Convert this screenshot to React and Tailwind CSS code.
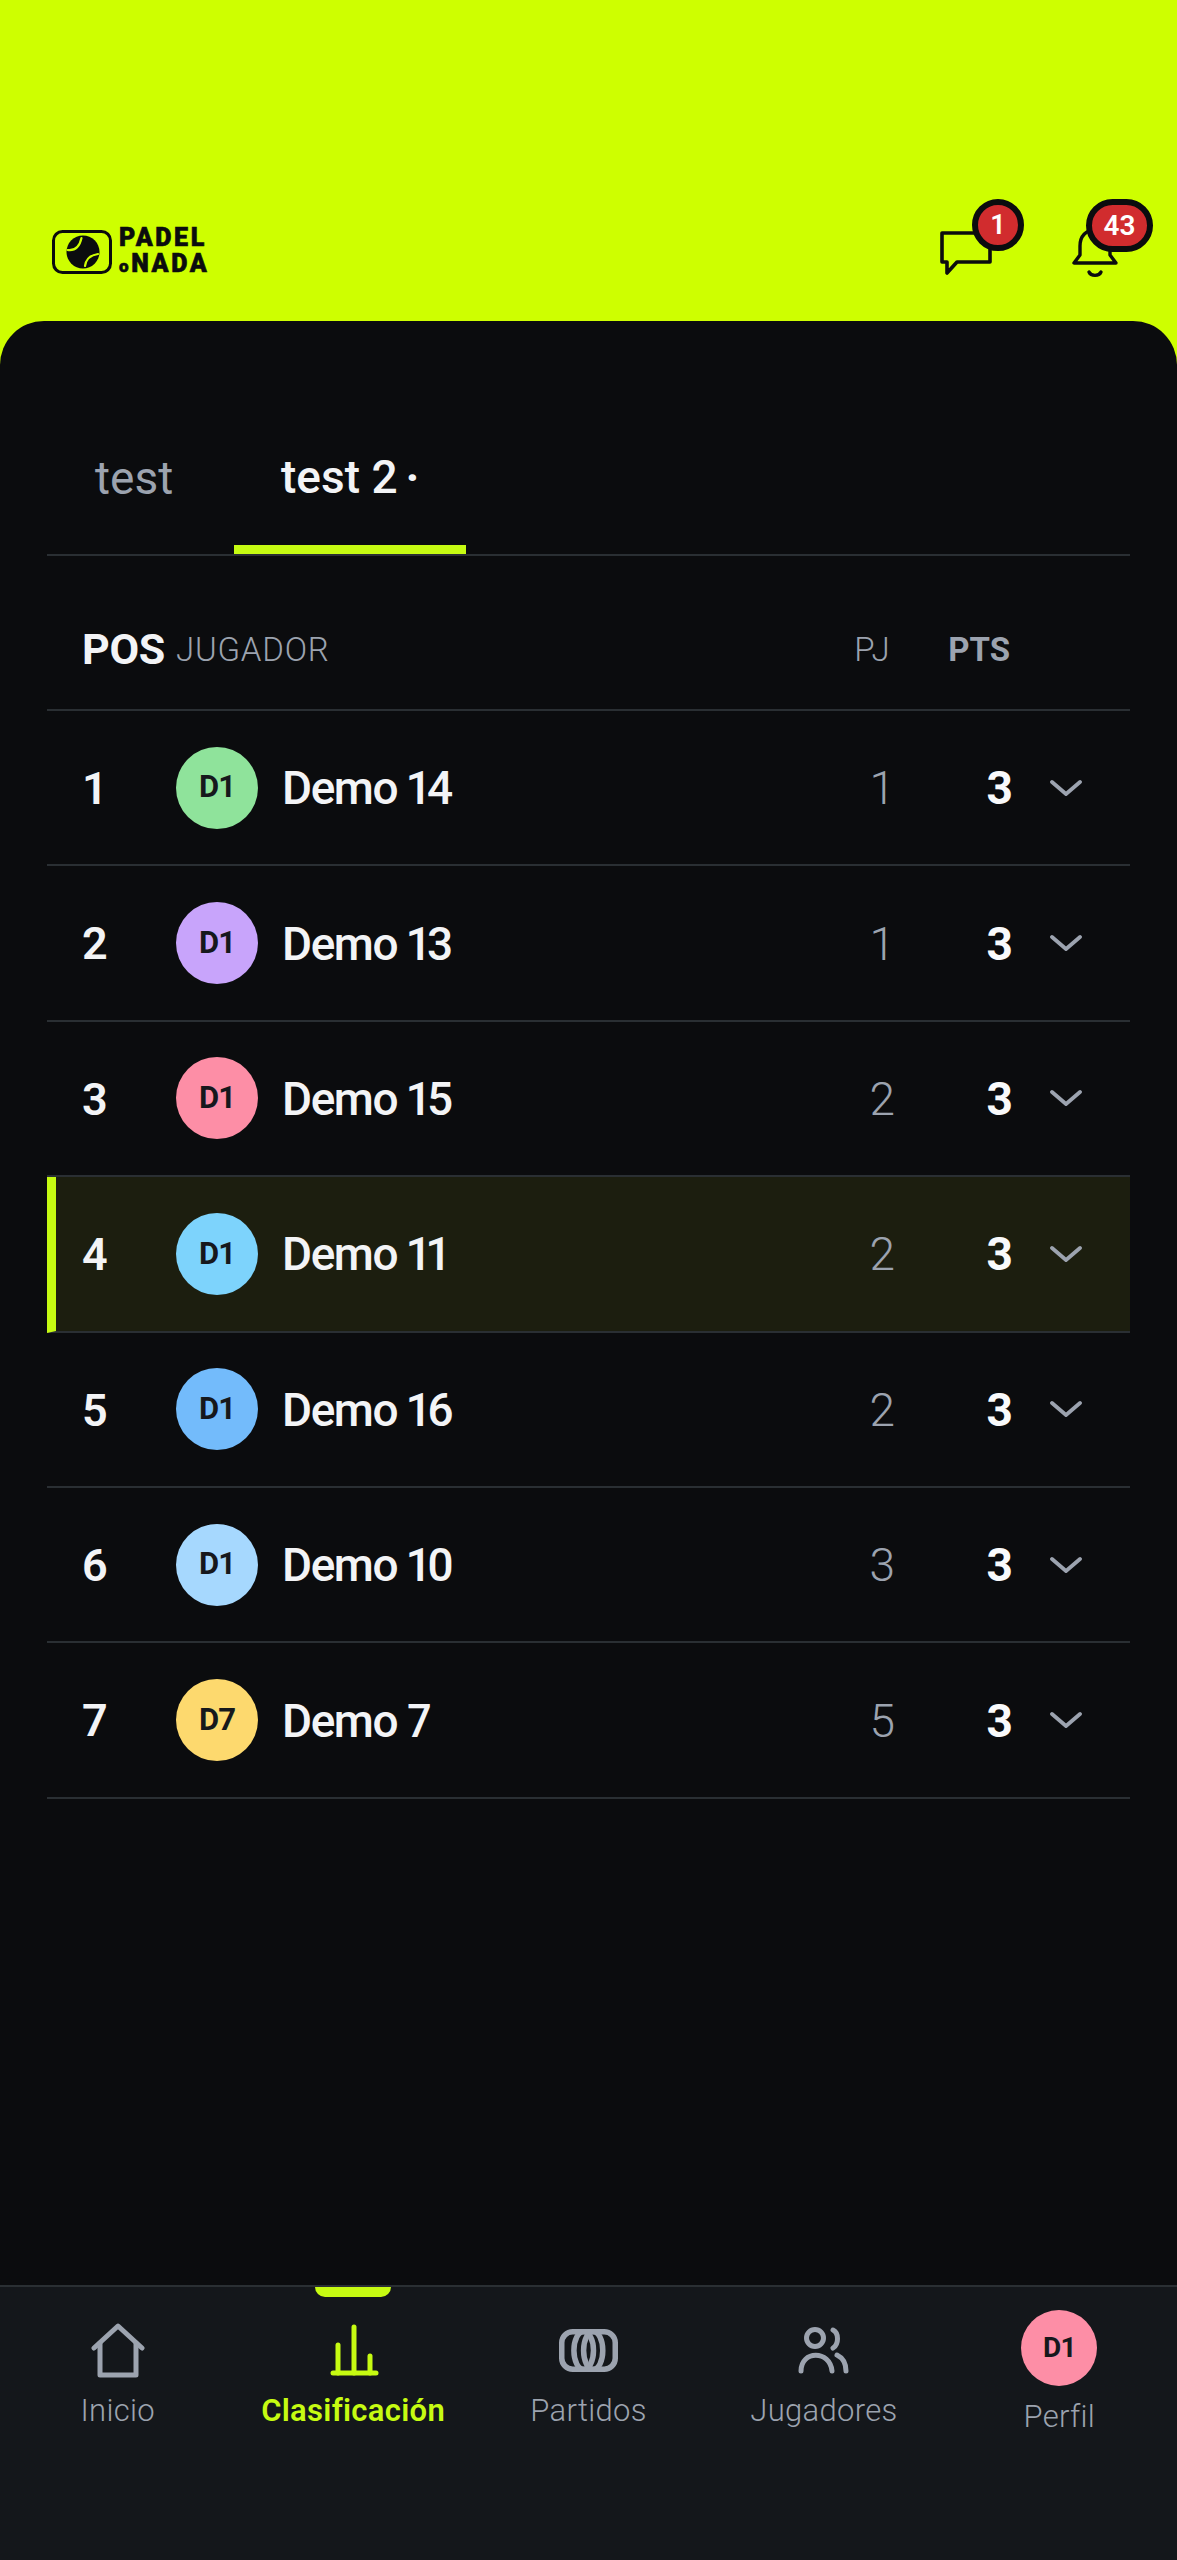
const ROWS = [
  { pos: 1, name: 'Demo 14', initials: 'D1', color: 'bg-[#8fe39b]', pj: 1 },
  { pos: 2, name: 'Demo 13', initials: 'D1', color: 'bg-[#c8a4fb]', pj: 1 },
  { pos: 3, name: 'Demo 15', initials: 'D1', color: 'bg-[#fd8ea6]', pj: 2 },
  { pos: 4, name: 'Demo 11', initials: 'D1', color: 'bg-[#7dd3fc]', pj: 2, me: true },
  { pos: 5, name: 'Demo 16', initials: 'D1', color: 'bg-[#73bbfb]', pj: 2 },
  { pos: 6, name: 'Demo 10', initials: 'D1', color: 'bg-[#a6d8fe]', pj: 3 },
  { pos: 7, name: 'Demo 7', initials: 'D7', color: 'bg-[#fdd96e]', pj: 5 },
];

// Logo mark: rounded frame with a padel ball
const LogoMark = () => (
  <svg width="60" height="44" viewBox="0 0 60 44" fill="none">
    <rect x="1.5" y="1.5" width="57" height="41" rx="9" stroke="#0b0c0e" strokeWidth="3" />
    <circle cx="31" cy="22" r="16.5" fill="#0b0c0e" />
    <path d="M15.5 20c7 1 12 -3 14 -12" stroke="#cfff00" strokeWidth="2.2" strokeLinecap="round" />
    <path d="M33 36c1 -7 6 -11 13 -12" stroke="#cfff00" strokeWidth="2.2" strokeLinecap="round" />
  </svg>
);

const ChatIcon = () => (
  <svg width="52" height="44" viewBox="0 0 52 44" fill="none" stroke="#0b0c0e" strokeWidth="3.6" strokeLinejoin="round" strokeLinecap="round">
    <path d="M2 2h48v29H17L7 42V31H2z" />
  </svg>
);

const BellIcon = () => (
  <svg width="46" height="50" viewBox="0 0 46 50" fill="none" stroke="#0b0c0e" strokeWidth="3.4" strokeLinejoin="round" strokeLinecap="round">
    <path d="M2 35h42l-6 -8V18C38 8 32 2 23 2S8 8 8 18v9z" />
    <path d="M17 44c2 4.500 10 4.500 12 0" />
  </svg>
);

const HomeIcon = () => (
  <svg width="54" height="55" viewBox="0 0 54 55" fill="none" stroke="#9ca3af" strokeWidth="5" strokeLinejoin="round" strokeLinecap="round">
    <path d="M3 25L27 3l24 22" />
    <path d="M9 20v32h36V20" />
  </svg>
);

const ChartIcon = () => (
  <svg className="ml-[3px]" width="49" height="52" viewBox="0 0 49 52" fill="none" stroke="#c6fb12" strokeWidth="5" strokeLinecap="round">
    <path d="M3 49h43" />
    <path d="M24 49V3" />
    <path d="M8 49V21" />
    <path d="M40 49V32" />
  </svg>
);

const MatchesIcon = () => (
  <svg width="59" height="43" viewBox="0 0 59 43" fill="none" stroke="#9ca3af" strokeWidth="5.500">
    <rect x="2.750" y="2.750" width="53.500" height="37.500" rx="11" />
    <ellipse cx="24.700" cy="21.500" rx="9.800" ry="19" />
    <ellipse cx="34.200" cy="21.500" rx="9.600" ry="19" />
  </svg>
);

const PlayersIcon = () => (
  <svg width="52" height="47" viewBox="0 0 52 47" fill="none" stroke="#9ca3af" strokeWidth="5" strokeLinecap="round">
    <circle cx="17" cy="11" r="8.500" />
    <path d="M3 44c0 -21 29 -21 31 0" />
    <path d="M35 3c6 3 6 14 0 18" />
    <path d="M39 28c6 3 9 9 9 16" />
  </svg>
);

const ChevronIcon = () => (
  <svg width="32" height="18" viewBox="0 0 32 18" fill="none" stroke="#9ca3af" strokeWidth="3.8" strokeLinecap="round" strokeLinejoin="round">
    <path d="M2 3l14 12L30 3" />
  </svg>
);

const NavItem = ({ icon, label, active }) => (
  <div className="flex flex-1 flex-col items-center">
    <div className="flex h-[62px] items-center justify-center">{icon}</div>
    <span className={`mt-[12px] text-[31px] leading-[36px] tracking-[0.3px] ${active ? 'font-semibold text-[#c6fb12]' : 'font-[350] text-[#9ca3af]'}`}>
      {label}
    </span>
  </div>
);

export default function App() {
  return (
    <div className="flex h-[2560px] w-[1177px] flex-col overflow-hidden bg-[#ceff00] font-['Roboto','Liberation_Sans',sans-serif]">
      {/* Header */}
      <header className="flex h-[321px] shrink-0 items-start justify-between pl-[52px] pr-[59px] pt-[198px]">
        <div className="mt-[27px] flex items-center gap-[7px]">
          <LogoMark />
          <div className="flex flex-col text-[#0b0c0e] [-webkit-text-stroke:0.6px_#0b0c0e]">
            <span className="text-[25px] font-black leading-[26px] tracking-[2.600px]">PADEL</span>
            <span className="text-[25px] font-black leading-[26px] tracking-[2.600px]">
              <span className="text-[17px]">o</span>NADA
            </span>
          </div>
        </div>
        <div className="flex items-start gap-[80px]">
          <div className="relative mt-[33px] h-[44px] w-[52px]">
            <ChatIcon />
            <span className="absolute -top-[32px] left-[32px] flex h-[52px] w-[52px] items-center justify-center rounded-full border-[6px] border-[#0b0c0e] bg-[#d12c2e] text-[27px] font-semibold text-white">
              1
            </span>
          </div>
          <div className="relative mt-[30px] h-[50px] w-[46px]">
            <BellIcon />
            <span className="absolute -top-[29px] left-[14px] flex h-[53px] w-[67px] items-center justify-center rounded-full border-[6px] border-[#0b0c0e] bg-[#d12c2e] text-[28px] font-semibold text-white">
              43
            </span>
          </div>
        </div>
      </header>

      {/* Main panel */}
      <main className="flex min-h-0 flex-1 flex-col rounded-t-[44px] bg-[#0b0c0e] px-[47px] pt-[94px]">
        {/* Tabs */}
        <div className="flex h-[141px] shrink-0 border-b-2 border-[#2a2f33]">
          <div className="w-[187px] pl-[48px] pt-[37px] text-[46px] leading-[52px] text-[#9ca3af]">test</div>
          <div className="relative -mb-[2px] w-[232px] pl-[47px] pt-[36px] text-[46px] font-medium leading-[52px] text-[#f3f4f6]">
            test 2<span className="ml-[8px] font-bold">·</span>
            <span className="absolute bottom-[2px] left-0 h-[9px] w-full bg-[#c6fb12]" />
          </div>
        </div>

        {/* Column header */}
        <div className="flex h-[155px] shrink-0 items-center border-b-2 border-[#2a2f33] pt-[34px]">
          <span className="ml-[35px] w-[94px] text-[43px] font-bold tracking-[-0.3px] text-[#f3f4f6]">POS</span>
          <span className="flex-1 text-[33px] font-light tracking-[0.8px] text-[#9ca3af]">JUGADOR</span>
          <span className="w-[40px] text-center text-[33px] font-light text-[#9ca3af]">PJ</span>
          <span className="ml-[54px] w-[64px] text-right text-[33px] font-bold text-[#9ca3af]">PTS</span>
          <span className="w-[120px]" />
        </div>

        {/* Rows */}
        {ROWS.map(row => (
          <div
            key={row.pos}
            className={`flex h-[155.4px] shrink-0 items-center border-b-2 border-[#2a2f33] pt-[2px] ${row.me ? 'border-l-[9px] border-l-[#c6fb12] bg-[#1c1e0f] pl-[26px]' : 'pl-[35px]'}`}
          >
            <span className="w-[94px] text-[45px] font-semibold text-[#f3f4f6]">{row.pos}</span>
            <span className={`-mt-[2px] flex h-[82px] w-[82px] shrink-0 items-center justify-center rounded-full text-[31px] font-bold tracking-[-1px] text-[#16181c] ${row.color}`}>
              {row.initials}
            </span>
            <span className="ml-[24px] flex-1 text-[46px] font-medium tracking-[-1.4px] text-[#f3f4f6] proportional-nums">{row.name}</span>
            <span className="w-[40px] text-right text-[46px] font-light text-[#9ca3af]">{row.pj}</span>
            <span className="w-[118px] text-right text-[46px] font-bold text-[#f9fafb]">3</span>
            <span className="-mt-[2px] flex w-[117px] justify-start pl-[37px]">
              <ChevronIcon />
            </span>
          </div>
        ))}
      </main>

      {/* Bottom navigation */}
      <nav className="relative flex h-[275px] shrink-0 border-t-2 border-[#2a2f33] bg-[#14171b] pt-[32px]">
        <span className="absolute left-[315px] top-0 h-[10px] w-[76px] rounded-b-[10px] bg-[#c6fb12]" />
        <NavItem icon={<HomeIcon />} label="Inicio" />
        <NavItem icon={<ChartIcon />} label="Clasificación" active />
        <NavItem icon={<MatchesIcon />} label="Partidos" />
        <NavItem icon={<PlayersIcon />} label="Jugadores" />
        <div className="-mt-[9px] flex flex-1 flex-col items-center">
          <span className="flex h-[76px] w-[76px] items-center justify-center rounded-full bg-[#fd8ea6] text-[28px] font-bold tracking-[-0.8px] text-[#16181c]">
            D1
          </span>
          <span className="mt-[13px] text-[31px] font-[350] leading-[36px] tracking-[0.3px] text-[#9ca3af]">Perfil</span>
        </div>
      </nav>
    </div>
  );
}
